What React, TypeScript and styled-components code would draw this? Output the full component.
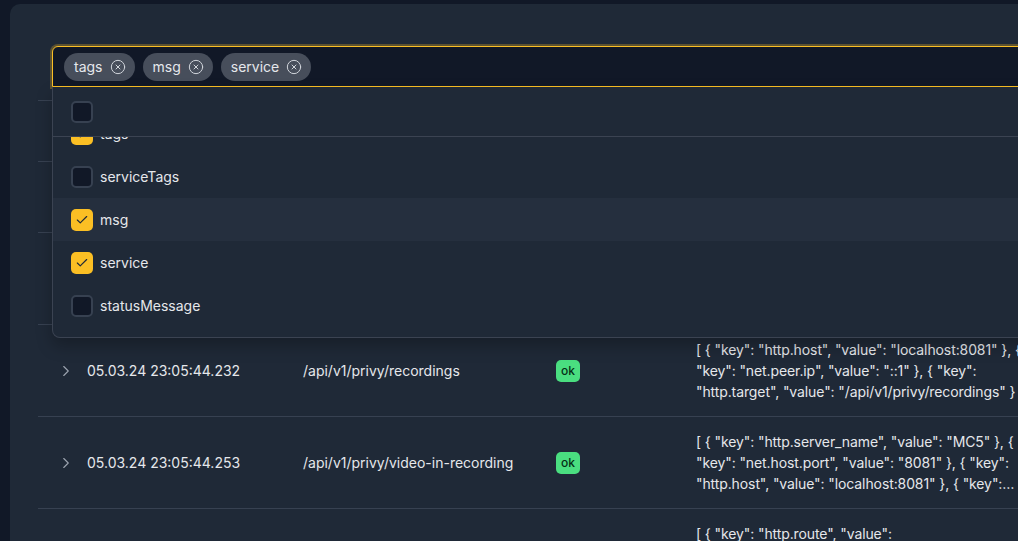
import React, { useLayoutEffect, useRef } from "react";
import styled, { createGlobalStyle } from "styled-components";
import { Check, ChevronRight, CircleX } from "lucide-react";

const GlobalStyle = createGlobalStyle`
  body {
    margin: 0;
    background: #111827;
    font-family: Inter, "Noto Sans", sans-serif;
    color: #e5e7eb;
    overflow: hidden;
  }
`;

const Page = styled.div`
  height: 541px;
  padding: 4px 0 0 10px;
  box-sizing: border-box;
  overflow: hidden;
`;

const Card = styled.div`
  width: 1120px;
  min-height: 600px;
  background: #1f2937;
  border-radius: 10px 10px 0 0;
  padding: 42px 28px 0 28px;
  box-sizing: border-box;
`;

const FilterArea = styled.div`
  position: relative;
  margin-left: 14px;
  z-index: 5;
`;

const TagInput = styled.div`
  display: flex;
  align-items: center;
  gap: 8px;
  height: 41px;
  padding: 0 11px;
  box-sizing: border-box;
  background: #111827;
  border: 1px solid #fbbf24;
  border-radius: 6px 6px 0 0;
  box-shadow: 0 0 0 2px rgba(251, 191, 36, 0.28);
`;

const Chip = styled.span`
  display: inline-flex;
  align-items: center;
  gap: 7px;
  height: 28px;
  padding: 0 9px 0 10px;
  border-radius: 14px;
  background: #474e5b;
  color: #e5e7eb;
  font-size: 14px;
  svg {
    color: #d1d5db;
  }
`;

const Dropdown = styled.div`
  position: absolute;
  top: 100%;
  left: 0;
  right: 0;
  background: #1f2937;
  border: 1px solid #3b4352;
  border-top: none;
  border-radius: 0 0 8px 8px;
  box-shadow: 0 8px 16px rgba(0, 0, 0, 0.25);
`;

const SelectAllRow = styled.div`
  display: flex;
  align-items: center;
  height: 49px;
  padding-left: 18px;
  border-bottom: 1px solid #3b4352;
`;

const OptionList = styled.div`
  height: 200px;
  overflow-y: auto;
  padding-bottom: 10px;
  box-sizing: border-box;
  scrollbar-width: none;
  &::-webkit-scrollbar {
    display: none;
  }
`;

const Option = styled.div<{ $active?: boolean }>`
  display: flex;
  align-items: center;
  gap: 7px;
  height: 43px;
  padding-left: 18px;
  font-size: 14px;
  color: #e5e7eb;
  background: ${(p) => (p.$active ? "#252f3e" : "transparent")};
`;

const Box = styled.span<{ $checked?: boolean }>`
  display: inline-flex;
  align-items: center;
  justify-content: center;
  width: 22px;
  height: 22px;
  box-sizing: border-box;
  border-radius: 5px;
  border: ${(p) => (p.$checked ? "none" : "2px solid #374151")};
  background: ${(p) => (p.$checked ? "#fbbf24" : "#111827")};
  color: #1f2937;
`;

const Table = styled.div`
  margin-top: 13px;
  border-top: 1px solid #374151;
`;

const Row = styled.div<{ $header?: boolean }>`
  display: grid;
  grid-template-columns: 49px 216px 253px 140px 338px;
  align-items: center;
  min-height: ${(p) => (p.$header ? "60px" : "auto")};
  padding: ${(p) => (p.$header ? "0" : "14px 0")};
  border-bottom: 1px solid #374151;
  font-size: 14px;
  color: ${(p) => (p.$header ? "#9ca3af" : "#e5e7eb")};
`;

const Chevron = styled(ChevronRight)`
  margin-left: 19px;
  color: #9ca3af;
`;

const Badge = styled.span`
  display: inline-flex;
  align-items: center;
  justify-content: center;
  width: 24px;
  height: 22px;
  border-radius: 5px;
  background: #4ade80;
  color: #052e16;
  font-size: 12px;
  font-weight: 500;
`;

const Attrs = styled.div<{ $lines: number }>`
  line-height: 21px;
  letter-spacing: -0.1px;
  display: -webkit-box;
  -webkit-box-orient: vertical;
  -webkit-line-clamp: ${(p) => p.$lines};
  overflow: hidden;
`;

const options = [
  { label: "name", checked: false },
  { label: "spanId", checked: false },
  { label: "traceId", checked: false },
  { label: "tags", checked: true },
  { label: "serviceTags", checked: false },
  { label: "msg", checked: true, active: true },
  { label: "service", checked: true },
  { label: "statusMessage", checked: false },
];

const rows = [
  {
    time: "05.03.24 23:05:44.198",
    path: "/api/v1/privy/status",
    attrs: '[ { "key": "http.method", "value": "GET" }, { "key": "http.scheme", "value": "http" } ]',
    lines: 2,
  },
  {
    time: "05.03.24 23:05:44.215",
    path: "/api/v1/privy/session",
    attrs:
      '[ { "key": "http.flavor", "value": "1.1" }, { "key": "http.user_agent", "value": "Mozilla/5.0" }, { "key": "http.status_code", "value": "200" } ]',
    lines: 3,
  },
  {
    time: "05.03.24 23:05:44.232",
    path: "/api/v1/privy/recordings",
    attrs:
      '[ { "key": "http.host", "value": "localhost:8081" }, { "key": "net.peer.ip", "value": "::1" }, { "key": "http.target", "value": "/api/v1/privy/recordings" } ]',
    lines: 3,
  },
  {
    time: "05.03.24 23:05:44.253",
    path: "/api/v1/privy/video-in-recording",
    attrs:
      '[ { "key": "http.server_name", "value": "MC5" }, { "key": "net.host.port", "value": "8081" }, { "key": "http.host", "value": "localhost:8081" }, { "key": "http.route", "value": "/api/v1/privy/video-in-recording" } ]',
    lines: 3,
  },
  {
    time: "05.03.24 23:05:44.270",
    path: "/api/v1/privy/recordings",
    attrs: '[ { "key": "http.route", "value": "/api/v1/privy/recordings" }, { "key": "net.host.name", "value": "localhost" } ]',
    lines: 3,
  },
];

const App: React.FC = () => {
  const listRef = useRef<HTMLDivElement>(null);

  useLayoutEffect(() => {
    if (listRef.current) {
      listRef.current.scrollTop = listRef.current.scrollHeight;
    }
  }, []);

  return (
    <Page>
      <GlobalStyle />
      <Card>
        <FilterArea>
          <TagInput>
            {["tags", "msg", "service"].map((t) => (
              <Chip key={t}>
                {t}
                <CircleX size={16} strokeWidth={1.5} />
              </Chip>
            ))}
          </TagInput>
          <Dropdown>
            <SelectAllRow>
              <Box />
            </SelectAllRow>
            <OptionList ref={listRef}>
              {options.map((o) => (
                <Option key={o.label} $active={o.active}>
                  <Box $checked={o.checked}>
                    {o.checked && <Check size={14} strokeWidth={2} />}
                  </Box>
                  {o.label}
                </Option>
              ))}
            </OptionList>
          </Dropdown>
        </FilterArea>
        <Table>
          <Row $header>
            <span />
            <span>Timestamp</span>
            <span>Name</span>
            <span>Status</span>
            <span>Attributes</span>
          </Row>
          {rows.map((r) => (
            <Row key={r.time}>
              <Chevron size={18} strokeWidth={1.5} />
              <span>{r.time}</span>
              <span>{r.path}</span>
              <span>
                <Badge>ok</Badge>
              </span>
              <Attrs $lines={r.lines}>{r.attrs}</Attrs>
            </Row>
          ))}
        </Table>
      </Card>
    </Page>
  );
};

export default App;
